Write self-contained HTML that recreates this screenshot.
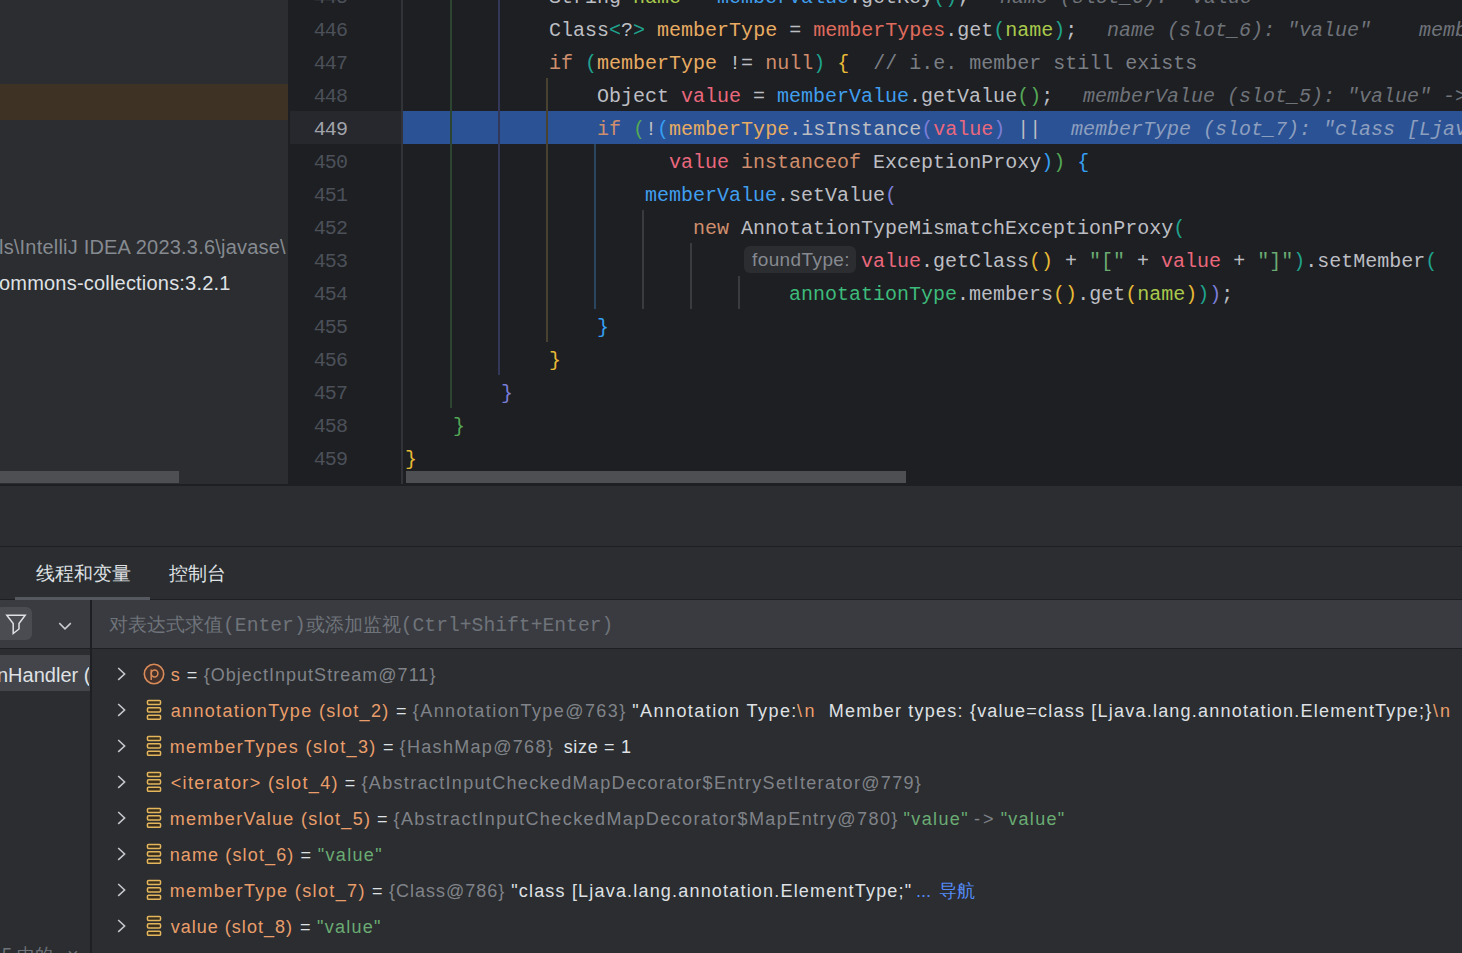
<!DOCTYPE html>
<html><head><meta charset="utf-8">
<style>
*{margin:0;padding:0;box-sizing:border-box}
html,body{width:1462px;height:953px;overflow:hidden;background:#2b2d30}
body{position:relative;font-family:"Liberation Sans",sans-serif}
.abs{position:absolute}
#proj{left:0;top:0;width:288px;height:484px;background:#2b2d30;overflow:hidden}
#gutter{left:288px;top:0;width:115px;height:484px;background:#1e1f22;overflow:hidden}
#editor{left:403px;top:0;width:1059px;height:484px;background:#1e1f22;overflow:hidden}
.code{position:absolute;left:2px;height:33px;line-height:37px;white-space:pre;font-family:"Liberation Mono",monospace;font-size:20px;color:#bcbec4;transform:scaleY(1.0);transform-origin:0 23.8px}
.ln{position:absolute;left:0;width:59px;text-align:right;height:33px;line-height:37px;font-family:"Liberation Mono",monospace;font-size:20px;letter-spacing:-0.9px;color:#4b5059}
.guide{position:absolute;width:2px}
.k{color:#cf8e6d}
.s{color:#6aab73}
.c{color:#7a7e85}
.h{color:#6f737a;font-style:italic}
.mt{color:#e8ac63}
.mts{color:#e06c5e}
.v{color:#ea687d}
.mv{color:#409eee}
.nm{color:#a9c94c}
.at{color:#3dbb7b}
.by{color:#e8ba36}
.bg{color:#54a857}
.bb{color:#359ff4}
.bp{color:#7a7ed9}
.bt{color:#1fa38e}
.ui{font-family:"Liberation Sans",sans-serif;font-size:18px;white-space:pre}
.row{position:absolute;left:0;height:36px;line-height:36px;white-space:pre;font-size:18px;color:#dfe1e5}
.vn{color:#e59b6a}
.gr{color:#868a91}
.gs{color:#6aab73}
.lk{color:#548af7}
.chev{position:absolute;left:117px;width:9px;height:9px}
</style></head><body>

<div id="proj" class="abs">
  <div class="abs" style="left:0;top:84px;width:288px;height:36px;background:#3d3223"></div>
  <div class="abs ui" style="left:-1px;top:229px;height:36px;line-height:36px;font-size:20px;letter-spacing:0.2px;color:#868a91">ls\IntelliJ IDEA 2023.3.6\javase\</div>
  <div class="abs ui" style="left:-1px;top:265px;height:36px;line-height:36px;font-size:20px;letter-spacing:0.2px;color:#dfe1e5">ommons-collections:3.2.1</div>
  <div class="abs" style="left:0;top:471px;width:179px;height:12px;background:#4d4f53"></div>
</div>

<div id="gutter" class="abs">
  <div class="abs" style="left:2px;top:111px;width:111px;height:33px;background:#26282d"></div>
  <div class="abs" style="left:113px;top:0;width:2px;height:484px;background:#313338"></div>
  <div class="ln" style="top:-21px">445</div>
  <div class="ln" style="top:12px">446</div>
  <div class="ln" style="top:45px">447</div>
  <div class="ln" style="top:78px">448</div>
  <div class="ln" style="top:111px;color:#a1a3ab">449</div>
  <div class="ln" style="top:144px">450</div>
  <div class="ln" style="top:177px">451</div>
  <div class="ln" style="top:210px">452</div>
  <div class="ln" style="top:243px">453</div>
  <div class="ln" style="top:276px">454</div>
  <div class="ln" style="top:309px">455</div>
  <div class="ln" style="top:342px">456</div>
  <div class="ln" style="top:375px">457</div>
  <div class="ln" style="top:408px">458</div>
  <div class="ln" style="top:441px">459</div>
</div>

<div id="editor" class="abs">
  <div class="abs" style="left:0;top:111px;width:1059px;height:33px;background:#2b5294"></div>
  
<div class="guide" style="left:47px;top:0;height:408px;background:#2c4430"></div>
<div class="guide" style="left:95px;top:0;height:375px;background:#33385a"></div>
<div class="guide" style="left:143px;top:78px;height:264px;background:#4a4230"></div>
<div class="guide" style="left:191px;top:144px;height:165px;background:#2b4660"></div>
<div class="guide" style="left:239px;top:210px;height:99px;background:#393b40"></div>
<div class="guide" style="left:287px;top:243px;height:66px;background:#393b40"></div>
<div class="guide" style="left:335px;top:276px;height:33px;background:#393b40"></div>
<div class="code" style="top:-21px">            String <span class="nm">name</span> = <span class="mv">memberValue</span>.getKey<span class="bt">()</span>;</div>
<div class="code h" style="top:-21px;left:597px">name (slot_6): "value"</div>
<div class="code" style="top:12px">            Class<span class="bt">&lt;</span>?<span class="bt">&gt;</span> <span class="mt">memberType</span> = <span class="mts">memberTypes</span>.get<span class="bt">(</span><span class="nm">name</span><span class="bt">)</span>;</div>
<div class="code h" style="top:12px;left:704px">name (slot_6): "value"    memberTypes (slot_3): size = 1</div>
<div class="code" style="top:45px">            <span class="k">if</span> <span class="bt">(</span><span class="mt">memberType</span> != <span class="k">null</span><span class="bt">)</span> <span class="by">{</span>  <span class="c">// i.e. member still exists</span></div>
<div class="code" style="top:78px">                Object <span class="v">value</span> = <span class="mv">memberValue</span>.getValue<span class="bg">()</span>;</div>
<div class="code h" style="top:78px;left:680px">memberValue (slot_5): "value" -> "value"</div>
<div class="code" style="top:111px">                <span class="k">if</span> <span class="bg">(</span>!<span class="bb">(</span><span class="mt">memberType</span>.isInstance<span class="bp">(</span><span class="v">value</span><span class="bp">)</span> ||</div>
<div class="code h" style="top:111px;left:668px;color:#8d9fbf">memberType (slot_7): "class [Ljava.lang.annotation.ElementType;"</div>
<div class="code" style="top:144px">                      <span class="v">value</span> <span class="k">instanceof</span> ExceptionProxy<span class="bb">)</span><span class="bg">)</span> <span class="bb">{</span></div>
<div class="code" style="top:177px">                    <span class="mv">memberValue</span>.setValue<span class="bp">(</span></div>
<div class="code" style="top:210px">                        <span class="k">new</span> AnnotationTypeMismatchExceptionProxy<span class="bt">(</span></div>
<div class="abs" style="left:341px;top:246px;width:112px;height:27px;border-radius:6px;background:#2b2d30"></div>
<div class="abs ui" style="left:349px;top:246px;height:27px;line-height:27px;font-size:19px;letter-spacing:0.4px;color:#868990">foundType:</div>
<div class="code" style="top:243px;left:458px"><span class="v">value</span>.getClass<span class="by">()</span> + <span class="s">"["</span> + <span class="v">value</span> + <span class="s">"]"</span><span class="bt">)</span>.setMember<span class="bt">(</span></div>
<div class="code" style="top:276px">                                <span class="at">annotationType</span>.members<span class="by">()</span>.get<span class="by">(</span><span class="nm">name</span><span class="by">)</span><span class="bt">)</span><span class="bp">)</span>;</div>
<div class="code" style="top:309px">                <span class="bb">}</span></div>
<div class="code" style="top:342px">            <span class="by">}</span></div>
<div class="code" style="top:375px">        <span class="bp">}</span></div>
<div class="code" style="top:408px">    <span class="bg">}</span></div>
<div class="code" style="top:441px"><span class="by">}</span></div>

  <div class="abs" style="left:3px;top:471px;width:500px;height:12px;background:#4d4f53"></div>
</div>

<div class="abs" style="left:0;top:484px;width:1462px;height:2px;background:#1e1f22"></div>
<div class="abs" style="left:0;top:546px;width:1462px;height:1px;background:#1e1f22"></div>

<!-- TABS -->
<div class="abs ui" style="left:36px;top:561px;font-size:19px;color:#dfe1e5">线程和变量</div>
<div class="abs ui" style="left:169px;top:561px;font-size:19px;color:#dfe1e5">控制台</div>
<div class="abs" style="left:15px;top:597px;width:135px;height:3px;background:#55585e;z-index:2"></div>
<div class="abs" style="left:0;top:599px;width:1462px;height:1px;background:#1e1f22"></div>

<!-- EVAL -->
<div class="abs" style="left:0;top:600px;width:1462px;height:48px;background:#393b40"></div>
<div class="abs" style="left:90px;top:600px;width:2px;height:353px;background:#1e1f22"></div>
<div class="abs" style="left:0;top:648px;width:1462px;height:1px;background:#1e1f22"></div>


<!-- filter btn -->
<div class="abs" style="left:-4px;top:607px;width:36px;height:33px;border-radius:6px;background:#4a4c51"></div>
<svg class="abs" style="left:0;top:608px" width="32" height="33" viewBox="0 0 32 33"><path d="M6.8 7.2 H25.2 L19 15.5 V21 L13.2 25.5 V15.5 Z" fill="none" stroke="#dfe1e5" stroke-width="1.5" stroke-linejoin="miter"/></svg>
<svg class="abs" style="left:56px;top:618px" width="18" height="14" viewBox="0 0 18 14"><path d="M3.3 5.1 L9 10.9 L14.8 5.1" fill="none" stroke="#c9ccd1" stroke-width="1.5"/></svg>
<div class="abs ui" style="left:109px;top:601px;height:47px;line-height:47px;font-size:19px;color:#6f737a">对表达式求值<span style="font-family:'Liberation Mono',monospace;font-size:19.7px">(Enter)</span>或添加监视<span style="font-family:'Liberation Mono',monospace;font-size:19.7px">(Ctrl+Shift+Enter)</span></div>
<!-- frames -->
<div class="abs" style="left:0;top:655px;width:90px;height:36px;background:#43454a"></div>
<div class="abs ui" style="left:-3px;top:657px;height:36px;line-height:36px;font-size:20px;letter-spacing:0px;color:#dfe1e5;width:92px;overflow:hidden">nHandler (</div>
<div class="abs ui" style="left:2px;top:940px;height:30px;line-height:30px;color:#6f737a">5 中的</div><div class="abs ui" style="left:67px;top:940px;height:30px;line-height:30px;font-size:20px;color:#6f737a">×</div>
<!-- variable rows -->
<div id="vars" class="abs" style="left:0;top:656px;width:1462px;height:297px;">
<svg class="abs" style="left:114px;top:8px" width="14" height="20" viewBox="0 0 14 20"><path d="M4.2 4 L10.6 10 L4.2 15.8" fill="none" stroke="#c4c7cd" stroke-width="1.6"/></svg>
<svg class="abs" style="left:143px;top:7px" width="22" height="22" viewBox="0 0 22 22"><circle cx="11" cy="11" r="9.7" fill="#42302a" stroke="#d98b5a" stroke-width="1.6"/><path d="M8.2 6.6 V17" stroke="#d98b5a" stroke-width="1.5" fill="none"/><ellipse cx="11.6" cy="10.6" rx="3.3" ry="3.5" stroke="#d98b5a" stroke-width="1.5" fill="none"/></svg>
<div class="row" style="left:170.7px;top:1px;color:#ea9e6b;letter-spacing:0.00px">s</div>
<div class="row" style="left:186.7px;top:1px;color:#dfe1e5;letter-spacing:0.00px">=</div>
<div class="row" style="left:203.7px;top:1px;color:#808389;letter-spacing:1.03px">{ObjectInputStream@711}</div>
<svg class="abs" style="left:114px;top:44px" width="14" height="20" viewBox="0 0 14 20"><path d="M4.2 4 L10.6 10 L4.2 15.8" fill="none" stroke="#c4c7cd" stroke-width="1.6"/></svg>
<svg class="abs" style="left:145px;top:42px" width="18" height="24" viewBox="0 0 18 24"><g fill="#3a2f1f" stroke="#e3b65c" stroke-width="1.5"><rect x="2.45" y="2.45" width="13.1" height="4" rx="1.1"/><rect x="2.45" y="9.85" width="13.1" height="4.1" rx="1.1"/><rect x="2.45" y="17.25" width="13.1" height="4.1" rx="1.1"/></g></svg>
<div class="row" style="left:170.7px;top:37px;color:#ea9e6b;letter-spacing:1.34px">annotationType (slot_2)</div>
<div class="row" style="left:396px;top:37px;color:#dfe1e5;letter-spacing:0.00px">=</div>
<div class="row" style="left:412.8px;top:37px;color:#808389;letter-spacing:1.42px">{AnnotationType@763}</div>
<div class="row" style="left:632.3px;top:37px;color:#dfe1e5;letter-spacing:1.43px">&quot;Annotation Type:</div>
<div class="row" style="left:797px;top:37px;color:#ea9e6b;letter-spacing:2.40px">\n</div>
<div class="row" style="left:828.8px;top:37px;color:#dfe1e5;letter-spacing:1.22px">Member types: {value=class [Ljava.lang.annotation.ElementType;}</div>
<div class="row" style="left:1433px;top:37px;color:#ea9e6b;letter-spacing:2.00px">\n</div>
<svg class="abs" style="left:114px;top:80px" width="14" height="20" viewBox="0 0 14 20"><path d="M4.2 4 L10.6 10 L4.2 15.8" fill="none" stroke="#c4c7cd" stroke-width="1.6"/></svg>
<svg class="abs" style="left:145px;top:78px" width="18" height="24" viewBox="0 0 18 24"><g fill="#3a2f1f" stroke="#e3b65c" stroke-width="1.5"><rect x="2.45" y="2.45" width="13.1" height="4" rx="1.1"/><rect x="2.45" y="9.85" width="13.1" height="4.1" rx="1.1"/><rect x="2.45" y="17.25" width="13.1" height="4.1" rx="1.1"/></g></svg>
<div class="row" style="left:169.7px;top:73px;color:#ea9e6b;letter-spacing:1.40px">memberTypes (slot_3)</div>
<div class="row" style="left:383px;top:73px;color:#dfe1e5;letter-spacing:0.00px">=</div>
<div class="row" style="left:399.6px;top:73px;color:#808389;letter-spacing:1.32px">{HashMap@768}</div>
<div class="row" style="left:563.7px;top:73px;color:#dfe1e5;letter-spacing:0.68px">size = 1</div>
<svg class="abs" style="left:114px;top:116px" width="14" height="20" viewBox="0 0 14 20"><path d="M4.2 4 L10.6 10 L4.2 15.8" fill="none" stroke="#c4c7cd" stroke-width="1.6"/></svg>
<svg class="abs" style="left:145px;top:114px" width="18" height="24" viewBox="0 0 18 24"><g fill="#3a2f1f" stroke="#e3b65c" stroke-width="1.5"><rect x="2.45" y="2.45" width="13.1" height="4" rx="1.1"/><rect x="2.45" y="9.85" width="13.1" height="4.1" rx="1.1"/><rect x="2.45" y="17.25" width="13.1" height="4.1" rx="1.1"/></g></svg>
<div class="row" style="left:170.7px;top:109px;color:#ea9e6b;letter-spacing:1.38px">&lt;iterator&gt; (slot_4)</div>
<div class="row" style="left:344.8px;top:109px;color:#dfe1e5;letter-spacing:0.00px">=</div>
<div class="row" style="left:361.5px;top:109px;color:#808389;letter-spacing:1.33px">{AbstractInputCheckedMapDecorator$EntrySetIterator@779}</div>
<svg class="abs" style="left:114px;top:152px" width="14" height="20" viewBox="0 0 14 20"><path d="M4.2 4 L10.6 10 L4.2 15.8" fill="none" stroke="#c4c7cd" stroke-width="1.6"/></svg>
<svg class="abs" style="left:145px;top:150px" width="18" height="24" viewBox="0 0 18 24"><g fill="#3a2f1f" stroke="#e3b65c" stroke-width="1.5"><rect x="2.45" y="2.45" width="13.1" height="4" rx="1.1"/><rect x="2.45" y="9.85" width="13.1" height="4.1" rx="1.1"/><rect x="2.45" y="17.25" width="13.1" height="4.1" rx="1.1"/></g></svg>
<div class="row" style="left:169.7px;top:145px;color:#ea9e6b;letter-spacing:1.29px">memberValue (slot_5)</div>
<div class="row" style="left:377px;top:145px;color:#dfe1e5;letter-spacing:0.00px">=</div>
<div class="row" style="left:393.5px;top:145px;color:#808389;letter-spacing:1.42px">{AbstractInputCheckedMapDecorator$MapEntry@780}</div>
<div class="row" style="left:903.6px;top:145px;color:#6aab73;letter-spacing:1.36px">&quot;value&quot;</div>
<div class="row" style="left:974px;top:145px;color:#808389;letter-spacing:2.91px">-&gt;</div>
<div class="row" style="left:1000.7px;top:145px;color:#6aab73;letter-spacing:1.26px">&quot;value&quot;</div>
<svg class="abs" style="left:114px;top:188px" width="14" height="20" viewBox="0 0 14 20"><path d="M4.2 4 L10.6 10 L4.2 15.8" fill="none" stroke="#c4c7cd" stroke-width="1.6"/></svg>
<svg class="abs" style="left:145px;top:186px" width="18" height="24" viewBox="0 0 18 24"><g fill="#3a2f1f" stroke="#e3b65c" stroke-width="1.5"><rect x="2.45" y="2.45" width="13.1" height="4" rx="1.1"/><rect x="2.45" y="9.85" width="13.1" height="4.1" rx="1.1"/><rect x="2.45" y="17.25" width="13.1" height="4.1" rx="1.1"/></g></svg>
<div class="row" style="left:169.7px;top:181px;color:#ea9e6b;letter-spacing:1.13px">name (slot_6)</div>
<div class="row" style="left:300.5px;top:181px;color:#dfe1e5;letter-spacing:0.00px">=</div>
<div class="row" style="left:317.8px;top:181px;color:#6aab73;letter-spacing:1.33px">&quot;value&quot;</div>
<svg class="abs" style="left:114px;top:224px" width="14" height="20" viewBox="0 0 14 20"><path d="M4.2 4 L10.6 10 L4.2 15.8" fill="none" stroke="#c4c7cd" stroke-width="1.6"/></svg>
<svg class="abs" style="left:145px;top:222px" width="18" height="24" viewBox="0 0 18 24"><g fill="#3a2f1f" stroke="#e3b65c" stroke-width="1.5"><rect x="2.45" y="2.45" width="13.1" height="4" rx="1.1"/><rect x="2.45" y="9.85" width="13.1" height="4.1" rx="1.1"/><rect x="2.45" y="17.25" width="13.1" height="4.1" rx="1.1"/></g></svg>
<div class="row" style="left:169.7px;top:217px;color:#ea9e6b;letter-spacing:1.37px">memberType (slot_7)</div>
<div class="row" style="left:372px;top:217px;color:#dfe1e5;letter-spacing:0.00px">=</div>
<div class="row" style="left:388.9px;top:217px;color:#808389;letter-spacing:1.01px">{Class@786}</div>
<div class="row" style="left:511.2px;top:217px;color:#dfe1e5;letter-spacing:1.19px">&quot;class [Ljava.lang.annotation.ElementType;&quot;</div>
<div class="row" style="left:916px;top:217px;color:#548af7;letter-spacing:0.00px">...</div>
<div class="row" style="left:938.5px;top:217px;color:#548af7;letter-spacing:0.00px">导航</div>
<svg class="abs" style="left:114px;top:260px" width="14" height="20" viewBox="0 0 14 20"><path d="M4.2 4 L10.6 10 L4.2 15.8" fill="none" stroke="#c4c7cd" stroke-width="1.6"/></svg>
<svg class="abs" style="left:145px;top:258px" width="18" height="24" viewBox="0 0 18 24"><g fill="#3a2f1f" stroke="#e3b65c" stroke-width="1.5"><rect x="2.45" y="2.45" width="13.1" height="4" rx="1.1"/><rect x="2.45" y="9.85" width="13.1" height="4.1" rx="1.1"/><rect x="2.45" y="17.25" width="13.1" height="4.1" rx="1.1"/></g></svg>
<div class="row" style="left:170.7px;top:253px;color:#ea9e6b;letter-spacing:1.02px">value (slot_8)</div>
<div class="row" style="left:300px;top:253px;color:#dfe1e5;letter-spacing:0.00px">=</div>
<div class="row" style="left:317px;top:253px;color:#6aab73;letter-spacing:1.25px">&quot;value&quot;</div>
</div>
</body></html>
